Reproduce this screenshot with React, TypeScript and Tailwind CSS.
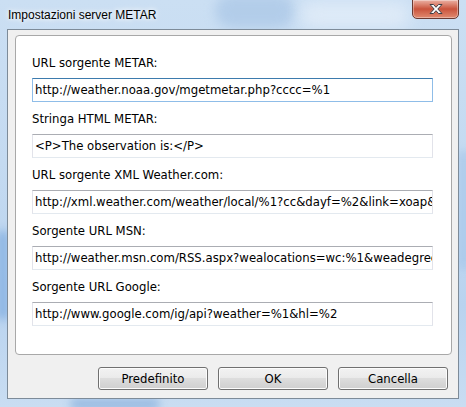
import React from "react";

const uiFont = {
  fontFamily: '"DejaVu Sans Condensed", "DejaVu Sans", sans-serif',
  fontStretch: "condensed" as const,
};
const titleFont = { fontFamily: '"Liberation Sans", Arial, sans-serif' };

type Field = { label: string; value: string; focused?: boolean };

const fields: Field[] = [
  { label: "URL sorgente METAR:", value: "http://weather.noaa.gov/mgetmetar.php?cccc=%1", focused: true },
  { label: "Stringa HTML METAR:", value: "<P>The observation is:</P>" },
  { label: "URL sorgente XML Weather.com:", value: "http://xml.weather.com/weather/local/%1?cc&dayf=%2&link=xoap&prod=xoap&par=%3&key=%4" },
  { label: "Sorgente URL MSN:", value: "http://weather.msn.com/RSS.aspx?wealocations=wc:%1&weadegreetype=C" },
  { label: "Sorgente URL Google:", value: "http://www.google.com/ig/api?weather=%1&hl=%2" },
];

function CloseButton() {
  return (
    <div className="mt-[-1px] mr-[7px] flex h-[20px] w-[47px] items-center justify-center rounded-b-[5px] border border-[#6b3a32] bg-gradient-to-b from-[#eab1a4] via-[#c9533c] to-[#e08a70] shadow-[inset_0_0_0_1px_rgba(255,255,255,0.35)]">
      <svg width="16" height="12" viewBox="0 0 16 12">
        <path
          d="M2 1.5 H5.5 L8 4.3 L10.5 1.5 H14 L9.8 6 L14 10.5 H10.5 L8 7.7 L5.5 10.5 H2 L6.2 6 Z"
          fill="#ffffff"
          stroke="#3f3f46"
          strokeWidth="1"
          strokeLinejoin="round"
        />
      </svg>
    </div>
  );
}

function TextBox({ value, focused }: { value: string; focused?: boolean }) {
  const border = focused
    ? "border-[#8fbde8] border-t-[#3d7bad]"
    : "border-[#e2e3ea] border-t-[#abadb3] border-b-[#e3e9ef]";
  return (
    <div
      className={`mt-[7px] flex h-[24px] w-[401px] items-center overflow-hidden whitespace-nowrap border bg-white pl-[2px] text-[13px] text-black ${border}`}
      style={uiFont}
    >
      {value}
    </div>
  );
}

function DialogButton({ children }: { children: React.ReactNode }) {
  return (
    <div
      className="flex h-[23px] w-[110px] items-center justify-center rounded-[3px] border border-[#707070] bg-[linear-gradient(to_bottom,#f2f2f2_0%,#ebebeb_45%,#dddddd_50%,#cfcfcf_100%)] text-[13px] text-black shadow-[inset_0_0_0_1px_#fcfcfc]"
      style={uiFont}
    >
      {children}
    </div>
  );
}

export default function App() {
  return (
    <div className="relative flex h-[407px] w-[466px] flex-col overflow-hidden bg-[linear-gradient(to_bottom,#cbdff3_0%,#c4daf1_40%,#b9d3ef_75%,#c9ddf2_100%)]">
      {/* glass haze behind the frame */}
      <div className="pointer-events-none absolute left-[215px] top-[-6px] h-[34px] w-[80px] rounded-full bg-[#a9c6e6] opacity-70 blur-[6px]" />
      <div className="pointer-events-none absolute left-[300px] top-[2px] h-[26px] w-[110px] rounded-full bg-[#e4eef9] opacity-80 blur-[8px]" />
      <div className="pointer-events-none absolute left-[-4px] top-[230px] h-[90px] w-[14px] rounded-full bg-[#86b1e2] opacity-80 blur-[4px]" />
      <div className="pointer-events-none absolute left-[70px] top-[398px] h-[12px] w-[90px] rounded-full bg-[#8fb4de] opacity-80 blur-[4px]" />
      <div className="pointer-events-none absolute right-[-4px] top-[150px] h-[120px] w-[12px] rounded-full bg-[#a7c7ea] opacity-80 blur-[4px]" />

      {/* title bar */}
      <div className="relative flex h-[29px] shrink-0 items-start justify-between">
        <div
          className="mt-[8px] pl-[8px] text-[12px] leading-[14px] text-black [text-shadow:0_0_7px_#ffffff,0_0_4px_#ffffff]"
          style={titleFont}
        >
          Impostazioni server METAR
        </div>
        <CloseButton />
      </div>

      {/* client area */}
      <div className="relative mx-[7px] mb-[8px] flex flex-1 flex-col border border-[#7d8b99] bg-[#f0f0f0] pb-[8px] pl-[7px] pr-[6px] pt-[5px]">
        <div className="flex h-[320px] w-[437px] flex-col gap-[9px] rounded-[4px] border border-[#a8a8a8] bg-white pl-[16px] pt-[19px]">
          {fields.map((f) => (
            <div key={f.label} className="flex flex-col">
              <div className="h-[16px] text-[13px] leading-[16px] text-black" style={uiFont}>
                {f.label}
              </div>
              <TextBox value={f.value} focused={f.focused} />
            </div>
          ))}
        </div>

        <div className="mt-[12px] flex justify-end gap-[10px] pr-[4px]">
          <DialogButton>Predefinito</DialogButton>
          <DialogButton>OK</DialogButton>
          <DialogButton>Cancella</DialogButton>
        </div>
      </div>
    </div>
  );
}
